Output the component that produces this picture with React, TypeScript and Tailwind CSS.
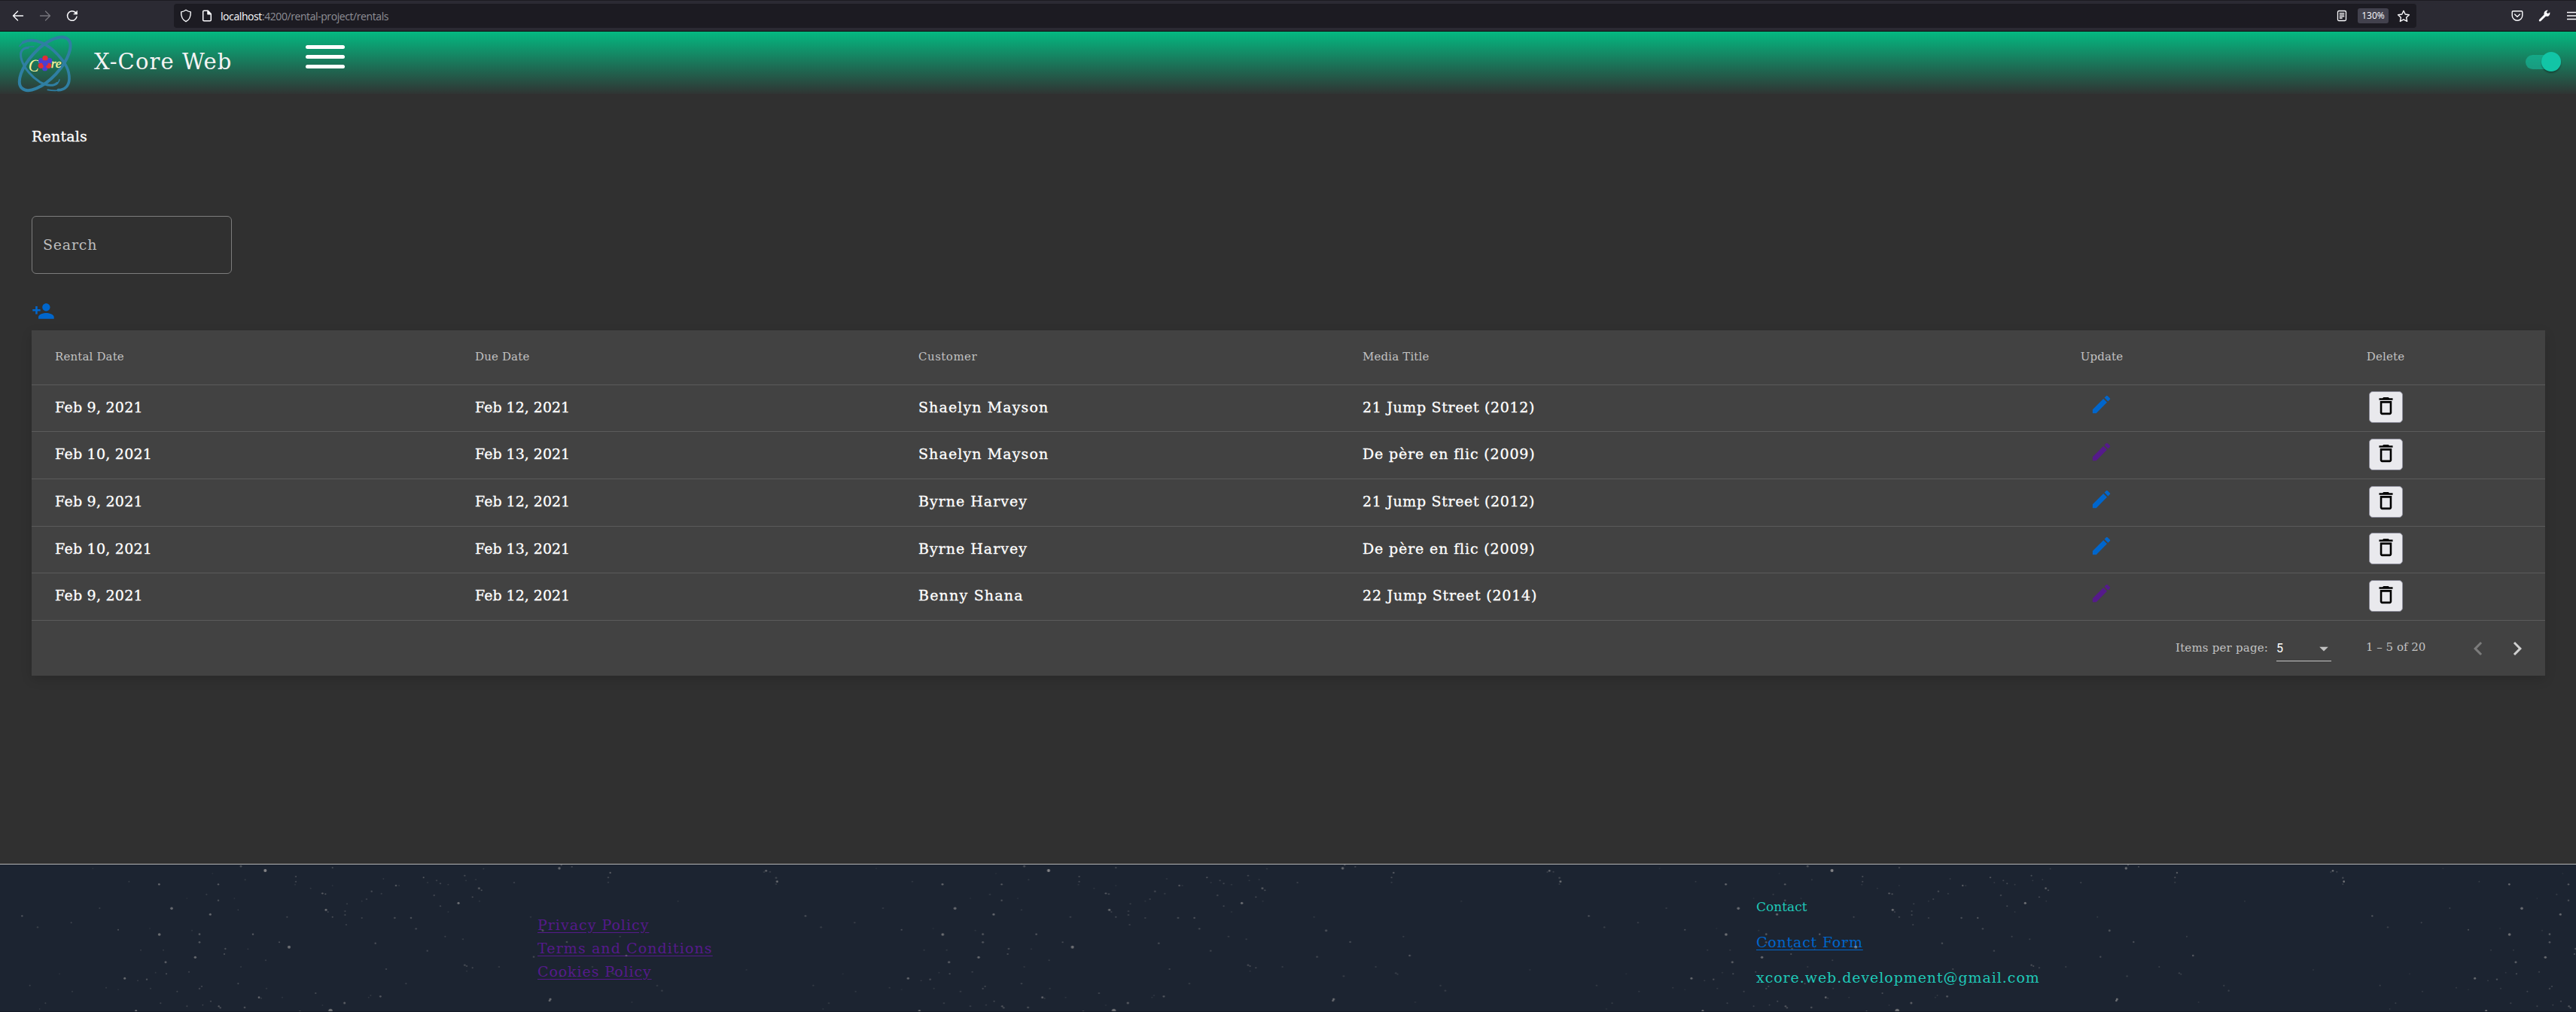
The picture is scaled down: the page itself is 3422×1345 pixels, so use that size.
import React from 'react';
import { MdEdit, MdDeleteOutline, MdPersonAdd, MdArrowDropDown, MdChevronLeft, MdChevronRight } from 'react-icons/md';

const slab = "font-['DejaVu_Serif',serif]";

/* x, y, radius, opacity; three units per pixel */
const stars: number[][] = [
  [960, 19, 4, 0.4], [1057, 36, 6, 0.85], [1325, 25, 3, 0.4], [1179, 60, 3, 0.4], [1179, 80, 3, 0.35], [1176, 92, 2.5, 0.2],
  [634, 91, 4, 0.6], [870, 91, 3.5, 0.5], [870, 155, 3.5, 0.4], [823, 131, 3, 0.25], [684, 187, 5.5, 0.6], [838, 211, 4.5, 0.6],
  [949, 193, 2.5, 0.3], [934, 147, 2.5, 0.2], [745, 147, 2.5, 0.15], [514, 80, 2.5, 0.25], [397, 186, 3, 0.25], [88, 217, 3.5, 0.45],
  [150, 262, 3.5, 0.25], [284, 244, 3, 0.3], [471, 272, 3, 0.45], [635, 291, 5.5, 0.65], [795, 290, 4, 0.45], [795, 322, 4, 0.45],
  [765, 275, 2.5, 0.2], [597, 267, 2.5, 0.15], [1144, 221, 3, 0.35], [1008, 290, 3.5, 0.5], [1113, 322, 3, 0.4], [1152, 341, 6, 0.65],
  [898, 348, 3.5, 0.4], [894, 369, 3, 0.45], [988, 349, 2.5, 0.25], [778, 382, 5, 0.6], [660, 401, 4.5, 0.5], [663, 448, 3, 0.4],
  [753, 440, 3, 0.3], [651, 353, 3, 0.2], [561, 353, 3, 0.2], [497, 466, 4.5, 0.6], [585, 470, 3.5, 0.4], [549, 475, 2.5, 0.3],
  [620, 443, 2.5, 0.2], [237, 448, 2.5, 0.15], [119, 494, 3, 0.25], [288, 518, 3, 0.2], [423, 503, 3, 0.2], [471, 511, 2.5, 0.15],
  [600, 506, 3, 0.2], [706, 518, 3, 0.3], [804, 498, 3, 0.35], [795, 507, 3.5, 0.3], [949, 487, 3, 0.4], [960, 420, 3, 0.2],
  [1059, 394, 3, 0.25], [1062, 506, 3, 0.2], [1032, 542, 4, 0.6], [1041, 545, 3, 0.2], [1125, 542, 2.5, 0.2], [181, 565, 3, 0.25],
  [158, 588, 2.5, 0.25], [640, 565, 3, 0.3], [745, 577, 3, 0.3], [840, 557, 3, 0.35], [808, 572, 2.5, 0.3], [872, 577, 3.5, 0.5],
  [878, 583, 3.5, 0.4], [975, 582, 4, 0.4], [542, 595, 4, 0.65], [1195, 597, 3, 0.4], [1317, 595, 8, 0.65], [1373, 564, 4.5, 0.5],
  [1258, 525, 3, 0.4], [1285, 573, 2.5, 0.2], [1516, 538, 4, 0.45], [1477, 534, 2.5, 0.3], [1469, 542, 2.5, 0.2], [1539, 429, 3, 0.35],
  [1496, 326, 3.5, 0.4], [1380, 252, 3, 0.3], [1375, 213, 3, 0.35], [1375, 198, 3, 0.3], [1383, 169, 3, 0.25], [1442, 225, 3, 0.3],
  [1442, 158, 2.5, 0.2], [1461, 150, 3, 0.3], [1481, 119, 3.5, 0.35], [1520, 128, 3, 0.25], [1528, 69, 2.5, 0.3], [1285, 127, 3.5, 0.5],
  [1297, 130, 3, 0.45], [1299, 193, 4.5, 0.65], [1307, 201, 3, 0.3], [1325, 221, 3, 0.4], [1238, 107, 2.5, 0.2], [977, 73, 3, 0.2],
  [847, 48, 2.5, 0.15], [370, 28, 2.5, 0.15], [1325, 96, 2.5, 0.2],
  [1578, 96, 3.5, 0.5], [1590, 96, 2.5, 0.25], [1573, 225, 3.5, 0.4], [1638, 225, 3.5, 0.45], [1658, 268, 3.5, 0.35], [1688, 64, 3, 0.5],
  [1704, 84, 2.5, 0.3], [1740, 76, 3, 0.3], [1755, 88, 3, 0.35], [1786, 92, 2.5, 0.25], [1730, 135, 3.5, 0.3], [1755, 178, 3, 0.35],
  [1786, 201, 2.5, 0.25], [1827, 166, 4.5, 0.7], [1852, 56, 3, 0.4], [1857, 76, 2.5, 0.25], [1896, 72, 2.5, 0.3], [1909, 107, 4, 0.5],
  [1919, 115, 3, 0.4], [1883, 142, 3, 0.35], [1911, 158, 2.5, 0.2], [1927, 29, 2.5, 0.25], [1774, 299, 3, 0.3], [1845, 310, 3, 0.25],
  [1703, 356, 3.5, 0.3], [1852, 413, 3.5, 0.4], [1860, 417, 3, 0.4], [1883, 424, 3, 0.35], [1860, 437, 2.5, 0.2], [1989, 420, 3, 0.25],
  [1618, 487, 3, 0.3], [2049, 84, 3, 0.3], [2229, 27, 5, 0.6], [2237, 14, 3, 0.35], [2279, 21, 3, 0.35], [2432, 45, 3.5, 0.5],
  [2424, 64, 3, 0.4], [2424, 83, 3, 0.25], [2702, 158, 3, 0.15], [3053, 37, 4, 0.6], [3069, 41, 3, 0.3], [3045, 42, 3, 0.25],
  [3093, 65, 3.5, 0.35], [3097, 80, 4, 0.7], [3093, 90, 3, 0.25], [2163, 275, 4.5, 0.4], [2259, 321, 3.5, 0.4], [2127, 380, 3.5, 0.35],
  [2115, 221, 3, 0.2], [2471, 299, 3, 0.25], [2496, 375, 4, 0.45], [2361, 420, 3, 0.25], [2233, 457, 3.5, 0.25], [2441, 445, 3.5, 0.25],
  [2448, 449, 3, 0.25], [2193, 549, 4.5, 0.65], [2190, 555, 4, 0.6], [2619, 495, 3.5, 0.2], [2638, 515, 3.5, 0.25], [2518, 561, 3, 0.15],
  [2975, 432, 3, 0.15],
];

function Starfield() {
  return (
    <svg className="pointer-events-none absolute inset-0 h-full w-full opacity-80">
      <defs>
        <pattern id="stars" width="3122" height="588" patternUnits="userSpaceOnUse" patternTransform="scale(0.33333)">
          {stars.map(([x, y, r, o]) => (
            <circle key={`${x}-${y}`} cx={x} cy={y - 12} r={r} fill="#b5b2b0" opacity={o} />
          ))}
        </pattern>
      </defs>
      <rect width="100%" height="100%" fill="url(#stars)" />
    </svg>
  );
}

function Logo() {
  const red = '#e02f35';
  const blue = '#4c3fd0';
  return (
    <svg className="h-[83px] w-[100px] shrink-0" viewBox="0 6 300 249">
      <g fill="none" stroke="#2f7fa3" strokeLinecap="round">
        <ellipse cx="179" cy="134" rx="134" ry="60" strokeWidth="12" transform="rotate(-47 179 134)" />
        <path strokeWidth="11" d="M92 49C140 25 195 60 229 97C262 133 277 160 276 195C275 222 258 239 232 239" />
        <path strokeWidth="5" d="M78 64Q83 54 98 47M236 240Q214 243 190 238" />
        <path strokeWidth="9" d="M112 70C87 72 77 88 86 118C96 152 127 187 160 208C187 224 216 223 228 211" />
        <path strokeWidth="4" d="M108 69Q122 64 135 66M226 214Q236 207 237 197" />
      </g>
      <g fill="#fdf6a0" className="font-['Liberation_Serif',serif] italic">
        <text x="114" y="164" fontSize="70" textLength="42" lengthAdjust="spacingAndGlyphs" transform="rotate(6 130 140)">C</text>
        <text x="203" y="149" fontSize="50" textLength="41" lengthAdjust="spacingAndGlyphs" stroke="#fdf6a0">re</text>
      </g>
      <circle cx="164" cy="122" r="11" fill={blue} />
      <circle cx="197" cy="122" r="11" fill={blue} />
      <circle cx="180" cy="112" r="11" fill={red} />
      <circle cx="179" cy="152" r="11" fill={blue} />
      <circle cx="163" cy="142" r="11" fill={red} />
      <circle cx="194" cy="142" r="11" fill={red} />
      <circle cx="180" cy="132" r="11" fill={blue} />
    </svg>
  );
}

function BrowserBar() {
  return (
    <div className="flex h-[42px] items-center border-t border-b border-t-[#1c1b22] border-b-[#0c0c0d] bg-[#2b2a33] font-['Open_Sans',sans-serif] text-[#fbfbfe]">
      <div className="flex w-[231px] items-center pl-4">
        <svg width="16" height="16" viewBox="0 0 16 16" fill="none" stroke="#fbfbfe" strokeWidth="1.4" strokeLinecap="round" strokeLinejoin="round">
          <path d="M14.5 8H1.5M7.5 2L1.5 8l6 6" />
        </svg>
        <svg className="ml-5" width="16" height="16" viewBox="0 0 16 16" fill="none" stroke="#77767d" strokeWidth="1.3" strokeLinecap="round" strokeLinejoin="round">
          <path d="M1.5 8h13M8.5 2l6 6-6 6" />
        </svg>
        <svg className="ml-5" width="16" height="16" viewBox="0 0 16 16" fill="none" stroke="#fbfbfe" strokeWidth="1.5" strokeLinecap="round" strokeLinejoin="round">
          <path d="M14 9.2A6.3 6.3 0 1 1 12.3 3.6L14 5.5" />
          <path d="M14.5 1.5V6h-4.5z" fill="#fbfbfe" strokeWidth="0.6" />
        </svg>
      </div>
      <div className="flex h-8 w-[2979px] items-center rounded bg-[#1c1b22] px-2">
        <svg width="16" height="18" viewBox="0 0 16 18" fill="none" stroke="#fbfbfe" strokeWidth="1.4" strokeLinejoin="round">
          <path d="M8 1.3C10 2.8 12 3.6 14.3 3.9C14.6 10 12.5 14.5 8 16.7C3.5 14.5 1.4 10 1.7 3.9C4 3.6 6 2.8 8 1.3z" />
        </svg>
        <svg className="ml-3" width="16" height="16" viewBox="0 0 16 16" fill="none" stroke="#fbfbfe" strokeWidth="1.5" strokeLinejoin="round">
          <path d="M4 1.3h5.2L13.3 5.5V13.5Q13.3 14.8 12 14.8H4Q2.7 14.8 2.7 13.5V2.6Q2.7 1.3 4 1.3z" />
          <path d="M9 1.5v4.2h4.2z" fill="#fbfbfe" />
        </svg>
        <span className="mt-0.5 ml-2.5 text-sm leading-5 tracking-[-0.42px] whitespace-nowrap text-[#8f8f96]">
          <span className="text-[#fbfbfe]">localhost</span>:4200/rental-project/rentals
        </span>
        <svg className="ml-auto" width="14" height="16" viewBox="0 0 14 16" fill="none" stroke="#fbfbfe" strokeWidth="1.3" strokeLinecap="round">
          <rect x="1.5" y="1.5" width="11" height="13" rx="1.5" />
          <path d="M4.2 4.7h5.6M4.2 6.8h5.6M4.2 8.9h5.6M4.2 11h3" />
        </svg>
        <span className="ml-3.5 flex h-5 w-[41px] items-center justify-center rounded-[3px] bg-[#42414d] text-xs">130%</span>
        <svg className="ml-[11px]" width="18" height="17" viewBox="0 0 18 17" fill="none" stroke="#fbfbfe" strokeWidth="1.4" strokeLinejoin="round">
          <path d="M9 1.3l2.2 4.7 5.2.7-3.8 3.5 1 5.2L9 12.9l-4.6 2.5 1-5.2L1.6 6.7l5.2-.7z" />
        </svg>
      </div>
      <svg className="ml-[126px] shrink-0" width="16" height="16" viewBox="0 0 16 16" fill="none" stroke="#fbfbfe" strokeWidth="1.4" strokeLinecap="round" strokeLinejoin="round">
        <path d="M2.5 1.8h11q1.3 0 1.3 1.3V7.5A6.8 6.8 0 0 1 1.2 7.5V3.1q0-1.3 1.3-1.3z" />
        <path d="M4.6 6L8 9.3 11.4 6" />
      </svg>
      <svg className="ml-5 shrink-0" width="16" height="16" viewBox="0 0 16 16">
        <path fill="#fbfbfe" d="M10.8.7Q12 .3 12.7.7L10.7 3.3 12.6 5.3 15.3 3.3Q15.9 6 14 8Q12.2 9.3 10 8.6L3.3 15.1Q2.2 16 1.1 15Q.3 14 1.2 12.9L7.6 6.4Q6.8 2.5 10.8.7z" />
      </svg>
      <svg className="ml-[22px] shrink-0" width="12" height="16" viewBox="0 0 12 16" stroke="#fbfbfe" strokeWidth="1.3">
        <path d="M0 3.5h12M0 8h12M0 12.5h12" />
      </svg>
    </div>
  );
}

function Header() {
  return (
    <header className="flex h-[83px] items-center bg-linear-to-b/srgb from-[#04b981] to-[#303433]">
      <Logo />
      <h1 className="ml-[25px] w-[281px] pb-px text-[29px] tracking-[1.1px] whitespace-nowrap text-[#f4f4f4]">X-Core Web</h1>
      <button className="mb-[16px] flex w-[52px] flex-col gap-2">
        <span className="h-[5px] rounded-full bg-white" />
        <span className="h-[5px] rounded-full bg-white" />
        <span className="h-[5px] rounded-full bg-white" />
      </button>
      <div className="mr-5 mb-[3px] ml-auto flex h-[19px] w-[47px] items-center justify-end rounded-full bg-[#15c5a5]/55">
        <span className="h-[26px] w-[26px] rounded-full bg-[#12c5a6] shadow-[0_2px_2px_rgba(0,0,0,0.3)]" />
      </div>
    </header>
  );
}

const cols = 'grid grid-cols-[558px_589px_590px_786px_392px_362px] items-center pl-[31px]';

const shaelyn = <span className="tracking-[1.1px]">Shaelyn Mayson</span>;
const byrne = <span className="tracking-[1px]">Byrne Harvey</span>;
const benny = <span className="tracking-[1.2px]">Benny Shana</span>;
const jump21 = <span className="tracking-[0.65px]">21 Jump Street (2012)</span>;
const jump22 = <span className="tracking-[0.8px]">22 Jump Street (2014)</span>;
const flic = <span className="tracking-[0.85px]">De père en flic (2009)</span>;

const rows = [
  { from: 'Feb 9, 2021', due: 'Feb 12, 2021', customer: shaelyn, title: jump21, visited: false, h: 'h-[62px]' },
  { from: 'Feb 10, 2021', due: 'Feb 13, 2021', customer: shaelyn, title: flic, visited: true, h: 'h-[63px]' },
  { from: 'Feb 9, 2021', due: 'Feb 12, 2021', customer: byrne, title: jump21, visited: false, h: 'h-[63px]' },
  { from: 'Feb 10, 2021', due: 'Feb 13, 2021', customer: byrne, title: flic, visited: false, h: 'h-[62px]' },
  { from: 'Feb 9, 2021', due: 'Feb 12, 2021', customer: benny, title: jump22, visited: true, h: 'h-[63px]' },
];

function RentalsTable() {
  return (
    <section className="mt-2.5 bg-[#424242] shadow-[0_5px_14px_rgba(0,0,0,0.14)]">
      <div className={`${cols} h-[73px] border-b border-[#5b5b5b] pb-0.5 text-[15px] tracking-[0.15px] text-[#c1c1c1]`}>
        <span>Rental Date</span>
        <span>Due Date</span>
        <span className="tracking-[0.5px]">Customer</span>
        <span>Media Title</span>
        <span className="text-center">Update</span>
        <span className="text-center">Delete</span>
      </div>
      {rows.map((r, i) => (
        <div key={i} className={`${cols} ${r.h} border-b border-[#5b5b5b] text-[19px] text-white [-webkit-text-stroke:0.3px_white]`}>
          <span className="pb-[3px] tracking-[0.25px]">{r.from}</span>
          <span className="pb-[3px]">{r.due}</span>
          <span className="pb-[3px]">{r.customer}</span>
          <span className="pb-[3px]">{r.title}</span>
          <MdEdit className={`mr-px mb-2.5 size-[31px] justify-self-center ${r.visited ? 'text-[#551a8b]' : 'text-[#0066cc]'}`} />
          <button className="mb-[3px] flex h-[42px] w-[45px] items-center justify-center justify-self-center rounded-[5px] border border-[#8f8f9d] bg-[#e9e9ed] pb-[3px] text-black">
            <MdDeleteOutline className="size-[31px] shrink-0" />
          </button>
        </div>
      ))}
      <div className="flex h-[73px] items-center pr-[19px] text-[15px] text-[#c1c1c1]">
        <span className="ml-auto w-[134px] pb-px tracking-[0.2px] whitespace-nowrap">Items per page:</span>
        <div className="mt-0.5 flex h-[32px] w-[73px] items-center justify-between border-b border-[#c6c6c6] font-[Roboto,sans-serif] text-base text-white">
          5
          <MdArrowDropDown className="-mr-1 size-7 text-[#c1c1c1]" />
        </div>
        <span className="ml-[46px] w-[131px] pb-0.5 whitespace-nowrap">1 – 5 of 20</span>
        <MdChevronLeft className="size-[36px] text-[#7c7c7c]" />
        <MdChevronRight className="ml-4 size-[36px] text-[#d0d0d0]" />
      </div>
    </section>
  );
}

function Footer() {
  return (
    <footer className="relative flex h-[197px] border-t border-b border-t-[#b4b4b4] border-b-[#141a26] bg-[#1c2431] text-[19px]">
      <nav className="ml-[714px] flex w-[1619px] flex-col items-start pt-[65px] leading-[31px] text-[#551a8b]">
        <a className="tracking-[1px] underline underline-offset-[3px]">Privacy Policy</a>
        <a className="tracking-[1.1px] underline underline-offset-[3px]">Terms and Conditions</a>
        <a className="tracking-[0.9px] underline underline-offset-[3px]">Cookies Policy</a>
      </nav>
      <div className="flex flex-col items-start pt-[41px] text-[#1fc9b8]">
        <h3 className="text-[17px] leading-[31px]">Contact</h3>
        <a className="mt-4 leading-[31px] tracking-[0.8px] text-[#0066cc] underline underline-offset-[3px]">Contact Form</a>
        <p className="mt-4 leading-[31px] tracking-[0.93px]">xcore.web.development@gmail.com</p>
      </div>
      <Starfield />
    </footer>
  );
}

export default function App() {
  return (
    <div className={`flex h-[1345px] w-[3422px] flex-col overflow-hidden bg-[#303030] ${slab}`}>
      <BrowserBar />
      <Header />
      <main className="flex-1 pr-[41px] pl-[42px]">
        <h2 className="pt-[42px] text-[19px] leading-[28px] tracking-[0.2px] text-white [-webkit-text-stroke:0.3px_white]">Rentals</h2>
        <div className="mt-[92px] flex h-[77px] w-[266px] items-center rounded-[6px] border border-[#7d7d7d] pl-[14px] text-[19px] tracking-[0.8px] text-[#bdbdbd]">
          Search
        </div>
        <MdPersonAdd className="mt-[34px] size-[31px] text-[#0066cc]" />
        <RentalsTable />
      </main>
      <Footer />
    </div>
  );
}
